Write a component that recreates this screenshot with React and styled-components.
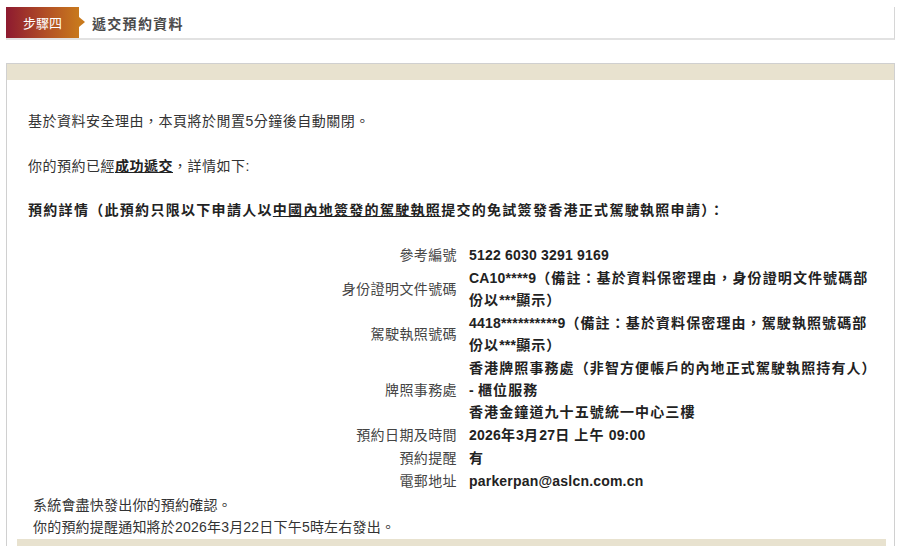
import React from 'react';
import styled, { createGlobalStyle } from 'styled-components';

const GlobalStyle = createGlobalStyle`
    body {
        margin: 0;
        background: #fff;
        font-family: "Liberation Sans", "Noto Sans CJK TC", sans-serif;
        color: #333;
    }
`;

const details = [
    { label: '參考編號', value: ['5122 6030 3291 9169'] },
    { label: '身份證明文件號碼', value: ['CA10****9（備註：基於資料保密理由，身份證明文件號碼部份以***顯示）'] },
    { label: '駕駛執照號碼', value: ['4418**********9（備註：基於資料保密理由，駕駛執照號碼部份以***顯示）'] },
    { label: '牌照事務處', value: ['香港牌照事務處（非智方便帳戶的內地正式駕駛執照持有人）', '- 櫃位服務', '香港金鐘道九十五號統一中心三樓'] },
    { label: '預約日期及時間', value: ['2026年3月27日 上午 09:00'] },
    { label: '預約提醒', value: ['有'] },
    { label: '電郵地址', value: ['parkerpan@aslcn.com.cn'] },
];

// bold CJK in the original is wider than the latin runs, so latin runs get their own spacing
const spaced = (text) =>
    text.split(/([\x00-\x7F]+)/).map((part, i) =>
        /^[\x00-\x7F]+$/.test(part) ? <Latin key={i}>{part}</Latin> : part
    );

function App() {
    return (
        <Page>
            <GlobalStyle />
            <StepBar>
                <StepBadge>步驟四</StepBadge>
                <StepTitle>遞交預約資料</StepTitle>
            </StepBar>

            <Panel>
                <PanelHead />
                <PanelBody>
                    <Para $gap="22px">基於資料安全理由，本頁將於閒置5分鐘後自動關閉。</Para>
                    <Para $gap="23px">你的預約已經<Strong>成功遞交</Strong>，詳情如下:</Para>
                    <Para $gap="22px" $bold>
                        預約詳情（此預約只限以下申請人以<U>中國內地簽發的駕駛執照</U>提交的免試簽發香港正式駕駛執照申請）：
                    </Para>

                    <DetailTable>
                        {details.map((d) => (
                            <DetailRow key={d.label}>
                                <Label>{d.label}</Label>
                                <Value>
                                    {d.value.map((v) => (
                                        <div key={v}>{spaced(v)}</div>
                                    ))}
                                </Value>
                            </DetailRow>
                        ))}
                    </DetailTable>

                    <Notes>
                        <div>系統會盡快發出你的預約確認。</div>
                        <div>你的預約提醒通知將於2026年3月22日下午5時左右發出。</div>
                    </Notes>
                    <PanelFoot />
                </PanelBody>
            </Panel>
        </Page>
    );
}

const Page = styled.div`
    padding: 7px 13px 0 6px;
    height: 546px;
    box-sizing: border-box;
    overflow: hidden;
`;

const StepBar = styled.div`
    display: flex;
    align-items: center;
    height: 31px;
    border-right: 1px solid #d6d6d6;
    border-bottom: 2px solid #e2e2e2;
`;

const StepBadge = styled.div`
    position: relative;
    height: 31px;
    width: 73px;
    display: flex;
    align-items: center;
    justify-content: center;
    color: #fff;
    font-size: 13px;
    background: linear-gradient(90deg, #8d1a30 0%, #b24f25 55%, #c8791d 100%);

    &::after {
        content: '';
        position: absolute;
        right: -6px;
        top: 10px;
        border-top: 5px solid transparent;
        border-bottom: 5px solid transparent;
        border-left: 6px solid #c8791d;
    }
`;

const StepTitle = styled.div`
    margin-left: 13px;
    font-size: 14px;
    font-weight: bold;
    letter-spacing: 1.3px;
    color: #4a4a4a;
`;

const Panel = styled.div`
    margin-top: 23px;
    border: 1px solid #d0d0d0;
    border-bottom: none;
`;

const PanelHead = styled.div`
    height: 16px;
    background: #e8e2cf;
`;

const PanelBody = styled.div`
    padding: 8px 8px 0 10px;
`;

const Para = styled.p`
    margin: ${(p) => p.$gap} 0 0 11px;
    font-size: 14px;
    line-height: 22px;
    letter-spacing: ${(p) => (p.$bold ? '1.3px' : '0.5px')};
    font-weight: ${(p) => (p.$bold ? 'bold' : 'normal')};
    color: ${(p) => (p.$bold ? '#222' : '#333')};
`;

const Strong = styled.span`
    font-weight: bold;
    text-decoration: underline;
    color: #222;
`;

const U = styled.span`
    text-decoration: underline;
`;

const DetailTable = styled.div`
    margin-top: 23px;
    display: flex;
    flex-direction: column;
    gap: 1px;
`;

const DetailRow = styled.div`
    display: grid;
    grid-template-columns: 452px 413px;
    align-items: center;
    font-size: 14px;
    line-height: 22px;
`;

const Label = styled.div`
    text-align: right;
    padding-right: 12px;
    letter-spacing: 0.4px;
    color: #444;
`;

const Value = styled.div`
    font-weight: bold;
    color: #222;
    letter-spacing: 1.1px;
`;

const Latin = styled.span`
    letter-spacing: 0.2px;
`;

const Notes = styled.div`
    margin: 2px 0 0 16px;
    font-size: 14px;
    line-height: 22px;
    letter-spacing: 0.2px;
    color: #333;
`;

const PanelFoot = styled.div`
    margin-top: 1px;
    height: 20px;
    background: #e8e2cf;
`;

export default App;
